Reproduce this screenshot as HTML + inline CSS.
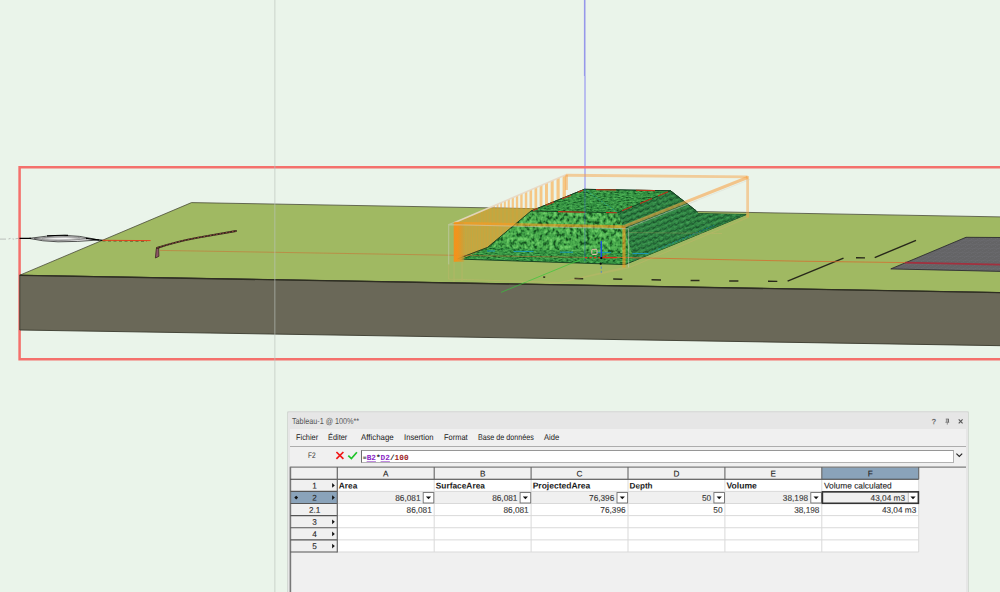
<!DOCTYPE html>
<html lang="fr">
<head>
<meta charset="utf-8">
<title>Tableau-1</title>
<style>
html,body{margin:0;padding:0;background:#eaf4ea;}
body{width:1000px;height:592px;position:relative;overflow:hidden;font-family:"Liberation Sans",sans-serif;color:#1b1b1b;}
#scene{position:absolute;left:0;top:0;}
#panel{position:absolute;left:288px;top:411px;width:680px;height:190px;background:#e6e6e6;border-radius:1.2px 1.2px 0 0;box-shadow:0 0 0 0.7px #c9cec9, inset 0 1.3px 0 #d3d6d3;clip-path:inset(0.45px -1px 0 -1px);}
#title{position:absolute;left:0;top:0;width:680px;height:18px;}
#title .cap{position:absolute;left:3.9px;top:5px;font-size:8.6px;line-height:11px;color:#555;white-space:nowrap;display:inline-block;transform-origin:0 0;transform:rotate(0.03deg) scaleX(0.84);}
#inner{position:absolute;left:2px;top:18px;width:676px;height:172px;background:#f0f0f0;}
#menu{position:absolute;left:0;top:0;width:676px;height:17px;}
#menu span{position:absolute;top:3.2px;font-size:8.3px;line-height:11px;color:#222;white-space:nowrap;display:inline-block;transform-origin:0 0;}
#sep{position:absolute;left:0;top:17px;width:676px;height:1px;background:#adadad;}
#fbar{position:absolute;left:0;top:18px;width:676px;height:20px;}
#cellref{position:absolute;left:18.2px;top:3.1px;font-size:8px;line-height:11px;color:#333;display:inline-block;transform-origin:0 0;transform:rotate(0.03deg) scaleX(0.82);}
#fbox{position:absolute;left:71px;top:3px;width:591px;height:11px;background:#fff;border:1px solid #b2b2b2;border-top-color:#969696;border-left-color:#6e6e6e;}
#ftext{position:absolute;left:0.3px;top:2px;display:inline-block;transform-origin:0 0;transform:rotate(0.03deg);font-family:"Liberation Mono",monospace;font-weight:bold;font-size:7.75px;line-height:11px;letter-spacing:0;white-space:nowrap;color:#222;}
#ftext .r{color:#8a24c4;text-decoration:underline;text-decoration-color:#c08ae0;text-underline-offset:0.6px;text-decoration-thickness:0.8px;}
#ftext .n{color:#9b1c1c;}
#grid{position:absolute;left:0;top:0;}
</style>
</head>
<body>
<svg id="scene" width="1000" height="592" viewBox="0 0 1000 592">
<defs>
<pattern id="gF" width="10" height="9" patternUnits="userSpaceOnUse">
<rect width="10" height="9" fill="#44a556"/>
<path d="M0.6 1.6q1.6 2 3.2 0.4M5 0.8q1.2 2.2 3.2 1.6M1.2 5q1.4 -1.8 3 0.2M5.6 5.8q1.8 1.6 3.4 -0.4M2.8 8q1.2 -1.4 2.8 0.2M7.8 3.6q0.9 1.1 1.8 0.2" stroke="#1b5a2a" stroke-width="1.25" fill="none" stroke-linecap="round"/>
<path d="M3.6 3.2l1 1M7.2 7.6l1 -1M0.2 7l0.9 0.7M9 0.3l0.6 0.9" stroke="#74d482" stroke-width="0.8" fill="none"/>
</pattern>
<pattern id="gT" width="6" height="3.2" patternUnits="userSpaceOnUse" patternTransform="skewX(-48)">
<rect width="6" height="3.2" fill="#3b9b4e"/>
<path d="M0.3 0.9q1.2 0.9 2.4 0.1M3.4 2.3q1.1 0.8 2.3 0" stroke="#1d6430" stroke-width="0.75" fill="none" stroke-linecap="round"/>
</pattern>
<pattern id="gR" width="6.5" height="5" patternUnits="userSpaceOnUse" patternTransform="rotate(-21) skewX(-35)">
<rect width="6.5" height="5" fill="#338c47"/>
<path d="M0.4 0.8q2.6 2.6 5.2 0.2" stroke="#16482a" stroke-width="1.2" fill="none" stroke-linecap="round"/>
<path d="M1.2 3.6q1.8 1.2 3.6 0.1" stroke="#4fb264" stroke-width="0.8" fill="none" stroke-linecap="round"/>
</pattern>
<pattern id="gB" width="5" height="2.6" patternUnits="userSpaceOnUse" patternTransform="skewX(-30)">
<rect width="5" height="2.6" fill="#358f48"/>
<path d="M0.3 0.8q1 0.8 2 0.1M2.8 1.9q1 0.7 2 0" stroke="#1a5a2b" stroke-width="0.7" fill="none" stroke-linecap="round"/>
</pattern>
<pattern id="asph" width="6" height="4" patternUnits="userSpaceOnUse" patternTransform="skewX(-60)">
<rect width="6" height="4" fill="#646466"/>
<path d="M0 0H6M0 0V4" stroke="#74747a" stroke-width="0.5" fill="none"/>
</pattern>
<filter id="nzF" x="0" y="0" width="1" height="1" color-interpolation-filters="sRGB">
<feTurbulence type="fractalNoise" baseFrequency="0.3 0.24" numOctaves="2" seed="11" result="n"/>
<feColorMatrix in="n" type="matrix" values="2.0 0 0 0 -0.46  2.0 0 0 0 -0.46  2.0 0 0 0 -0.46  0 0 0 0 1"/>
<feComponentTransfer><feFuncR type="table" tableValues="0.08 0.16 0.27 0.33 0.42"/><feFuncG type="table" tableValues="0.3 0.48 0.65 0.71 0.8"/><feFuncB type="table" tableValues="0.12 0.2 0.29 0.33 0.4"/></feComponentTransfer>
<feComposite in2="SourceGraphic" operator="in"/>
</filter>
<filter id="nzT" x="0" y="0" width="1" height="1" color-interpolation-filters="sRGB">
<feTurbulence type="fractalNoise" baseFrequency="0.3 0.75" numOctaves="2" seed="5" result="n"/>
<feColorMatrix in="n" type="matrix" values="1.7 0 0 0 -0.35  1.7 0 0 0 -0.35  1.7 0 0 0 -0.35  0 0 0 0 1"/>
<feComponentTransfer><feFuncR type="table" tableValues="0.08 0.17 0.25 0.32"/><feFuncG type="table" tableValues="0.33 0.52 0.63 0.72"/><feFuncB type="table" tableValues="0.13 0.23 0.29 0.35"/></feComponentTransfer>
<feComposite in2="SourceGraphic" operator="in"/>
</filter>
<filter id="nzR" x="0" y="0" width="1" height="1" color-interpolation-filters="sRGB">
<feTurbulence type="fractalNoise" baseFrequency="0.3 0.45" numOctaves="2" seed="8" result="n"/>
<feColorMatrix in="n" type="matrix" values="1.7 0 0 0 -0.35  1.7 0 0 0 -0.35  1.7 0 0 0 -0.35  0 0 0 0 1"/>
<feComponentTransfer><feFuncR type="table" tableValues="0.06 0.13 0.2 0.26"/><feFuncG type="table" tableValues="0.25 0.42 0.52 0.6"/><feFuncB type="table" tableValues="0.11 0.2 0.27 0.32"/></feComponentTransfer>
<feComposite in2="SourceGraphic" operator="in"/>
</filter>
<linearGradient id="postL" x1="0" x2="1" y1="0" y2="0">
<stop offset="0" stop-color="#f59119"/><stop offset="0.35" stop-color="#f3931b"/><stop offset="0.7" stop-color="#de992a" stop-opacity="0.9"/><stop offset="1" stop-color="#cba038" stop-opacity="0.5"/>
</linearGradient>
</defs>
<rect x="0" y="0" width="1000" height="592" fill="#eaf4ea"/>
<line x1="584.7" y1="0" x2="584.7" y2="76" stroke="#9698ea" stroke-width="1.6"/>
<line x1="585" y1="76" x2="585" y2="190" stroke="#a9abef" stroke-width="1.5"/>
<!-- selection frame -->
<path d="M1002,167.2 H19.6 V359.2 H1002" fill="none" stroke="#f4706c" stroke-width="2.5"/>
<!-- terrain slab -->
<polygon points="19.8,275.2 191.5,202.6 1001,216.9 1001,292.6" fill="#a0b962" stroke="#4a4b3a" stroke-width="0.8" stroke-linejoin="round"/>
<polygon points="19.8,275.2 1001,292.6 1001,345.7 19.8,330" fill="#6a6858" stroke="#3a3a2e" stroke-width="0.9" stroke-linejoin="round"/>
<line x1="19.8" y1="275.3" x2="1001" y2="292.7" stroke="#2e2e22" stroke-width="1.3"/>
<path d="M0,239.1 H6 M8.5,239 l2,-0.6 M12.5,238.9 l1.6,0.3 M15.5,238.8 l3,-0.5" stroke="#9a9a9a" stroke-width="0.8" fill="none" opacity="0.75"/>
<path d="M29,238.4 Q46,235.5 65,235.4 Q80,235.7 92,238.6 L99,240 Q76,241.9 58,241.8 Q42,241.4 29,238.4 Z" fill="#f6f6f6" stroke="#0a0a0a" stroke-width="0.7" stroke-linejoin="round"/>
<path d="M34,238.6 Q50,236.5 66,236.5 Q78,236.8 87,238.8 Q70,240.7 58,240.6 Q45,240.3 34,238.6 Z" fill="#d4d4d4" stroke="#3a3a3a" stroke-width="0.5"/>
<path d="M42,238.6 Q54,237.6 66,237.7 Q75,238 80,238.8 Q68,239.7 58,239.6 Q49,239.5 42,238.6 Z" fill="#fff" stroke="#8a8a8a" stroke-width="0.4"/>
<path d="M19.5,238.4 H31 M47,235.9 Q56,235.1 68,235.3 M86,238.4 Q93,239.2 102.5,240.4" stroke="#000" stroke-width="1.2" fill="none"/>
<line x1="102.5" y1="240.9" x2="147" y2="241.2" stroke="#2a1a10" stroke-width="0.8" stroke-dasharray="3 2.5" opacity="0.8"/>
<line x1="102.5" y1="240.3" x2="150.6" y2="240.6" stroke="#e2431c" stroke-width="1"/>
<polyline points="159.8,250.4 455,255.3" fill="none" stroke="#d2602a" stroke-width="0.8" opacity="0.6"/>
<path d="M155.4,258 L156.3,248.6 L158.6,247.3 L158.9,256.3 Z" fill="#8d5566" stroke="#3c2622" stroke-width="0.8" stroke-linejoin="round"/>
<path d="M157,248 Q176,241.6 198,237.6 L236,231" fill="none" stroke="#33241c" stroke-width="1.9" stroke-linecap="round"/>
<path d="M157,248 Q176,241.6 198,237.6 L236,231" fill="none" stroke="#9a5040" stroke-width="0.9" stroke-dasharray="1.6 1.6"/>
<polygon points="890.8,268.9 966,237.3 1001,237.5 1001,271.4" fill="url(#asph)" stroke="#2e2e30" stroke-width="0.9" stroke-linejoin="round"/>
<line x1="787.6" y1="281.1" x2="843.5" y2="258.1" stroke="#27271a" stroke-width="1.4"/>
<line x1="874.7" y1="257.6" x2="916" y2="240.3" stroke="#27271a" stroke-width="1.4"/>
<line x1="768" y1="281.3" x2="777.3" y2="281.4" stroke="#27271a" stroke-width="1.4"/>
<line x1="856" y1="257.8" x2="865" y2="257.9" stroke="#27271a" stroke-width="1.4"/>
<line x1="543.2" y1="277.1" x2="545.2" y2="277.25" stroke="#2c2c1c" stroke-width="1.5"/>
<line x1="574.5" y1="278.5" x2="583.2" y2="278.65" stroke="#2c2c1c" stroke-width="1.5"/>
<line x1="613.2" y1="279.0" x2="622.3" y2="279.15" stroke="#2c2c1c" stroke-width="1.5"/>
<line x1="651.5" y1="279.8" x2="661" y2="279.95" stroke="#2c2c1c" stroke-width="1.5"/>
<line x1="690.6" y1="280.4" x2="699.5" y2="280.55" stroke="#2c2c1c" stroke-width="1.5"/>
<line x1="729.2" y1="280.9" x2="738.4" y2="281.05" stroke="#2c2c1c" stroke-width="1.5"/>
<polygon points="457.2,259 487.6,247.4 531,211 584.4,189.3 670.6,190.8 696.3,210.9 698,213.6 746.2,214.6 625,264.6" fill="#2f8a44" filter="url(#nzT)"/>
<polygon points="457.2,259 487.6,247.4 531,211 584.4,189.3 670.6,190.8 696.3,210.9 698,213.6 746.2,214.6 625,264.6" fill="none" stroke="#153d20" stroke-width="0.9" stroke-linejoin="round"/>
<path d="M462,219.45 L463.06,218.99 L463.06,258.15 L462,258.61 Z M464.04,218.57 L465.15,218.1 L465.15,257.24 L464.04,257.72 Z M466.18,217.66 L467.33,217.16 L467.33,256.29 L466.18,256.79 Z M468.4,216.7 L469.61,216.19 L469.61,255.3 L468.4,255.83 Z M470.72,215.71 L471.98,215.17 L471.98,254.27 L470.72,254.82 Z M473.14,214.67 L474.45,214.11 L474.45,253.2 L473.14,253.77 Z M475.66,213.59 L477.03,213 L477.03,252.08 L475.66,252.67 Z M478.29,212.46 L479.72,211.84 L479.72,250.91 L478.29,251.53 Z M481.04,211.28 L482.52,210.64 L482.52,249.69 L481.04,250.33 Z M483.9,210.05 L485.45,209.38 L485.45,248.41 L483.9,249.09 Z M486.88,208.77 L488.5,208.07 L488.5,247.09 L486.88,247.79 Z M490,207.43 L491.69,206.71 L491.69,245.7 L490,246.44 Z M493.25,206.04 L495.01,205.28 L495.01,244.26 L493.25,245.03 Z M496.63,204.58 L498.47,203.79 L498.47,242.75 L496.63,243.55 Z M500.17,203.06 L502.08,202.24 L502.08,241.18 L500.17,242.02 Z M503.85,201.48 L505.85,200.62 L505.85,239.55 L503.85,240.42 Z M507.7,199.83 L509.78,198.94 L509.78,237.84 L507.7,238.74 Z M511.71,198.11 L513.88,197.18 L513.88,236.06 L511.71,237 Z M515.89,196.32 L518.15,195.34 L518.15,234.2 L515.89,235.18 Z M520.25,194.44 L522.61,193.43 L522.61,232.26 L520.25,233.29 Z M524.8,192.49 L527.26,191.43 L527.26,230.24 L524.8,231.31 Z M529.54,190.45 L532.11,189.35 L532.11,228.13 L529.54,229.25 Z M534.49,188.33 L537.17,187.18 L537.17,225.93 L534.49,227.1 Z M539.65,186.11 L542.45,184.91 L542.45,223.64 L539.65,224.85 Z M545.03,183.8 L547.95,182.55 L547.95,221.25 L545.03,222.51 Z M550.65,181.39 L553.69,180.08 L553.69,218.75 L550.65,220.07 Z M556.5,178.88 L559.68,177.51 L559.68,216.15 L556.5,217.53 Z M562.61,176.26 L565.92,174.83 L565.92,213.43 L562.61,214.87 Z" fill="#ff9a1f" opacity="0.5"/>
<polygon points="458,221.2 489.8,207.7 566,209 566,213.4 454.2,262" fill="#c6a43c" opacity="0.78"/>
<line x1="454.2" y1="222.8" x2="566" y2="174.8" stroke="#e8d8c4" stroke-width="1.6" opacity="0.9"/>
<line x1="566" y1="175.2" x2="747.6" y2="176.9" stroke="#f9a040" stroke-width="2.9" opacity="0.47"/>
<line x1="747.6" y1="176.1" x2="747.6" y2="217.6" stroke="#f9a040" stroke-width="2.8" opacity="0.45"/>
<line x1="566.6" y1="174.8" x2="566.6" y2="190" stroke="#f9a040" stroke-width="2.6" opacity="0.5"/>
<polygon points="617.8,212.7 670.6,190.8 696.3,210.9 698,213.6 746.2,214.6 633,261.3 632.3,253.6" fill="#2c7f40" filter="url(#nzR)"/>
<polygon points="617.8,212.7 670.6,190.8 696.3,210.9 698,213.6 746.2,214.6 633,261.3 632.3,253.6" fill="url(#gR)" opacity="0.62"/>
<polygon points="487.6,247.4 531,211 617.8,212.7 632.3,253.6" fill="#44a556" filter="url(#nzF)"/>
<polygon points="531,211 584.4,189.3 670.6,190.8 617.8,212.7" fill="#3b9b4e" filter="url(#nzT)"/>
<path d="M531,211 L617.8,212.7 L670.6,190.8 M584.4,189.3 L670.6,190.8 M531,211 L584.4,189.3 M457.2,259 L487.6,247.4 L531,211 M670.6,190.8 L696.3,210.9" fill="none" stroke="#123a1d" stroke-width="0.9"/>
<path d="M596,189.6 L616,190 M636,190.2 L655,190.6 M533,210.4 l5,-2 M546,205.2 l8,-3.2 M562,198.8 l9,-3.6 M578,192.3 l5,-2 M558,211.6 L585,212.2 M606,212.5 L617,212.7 M622,210.8 l10,-4.2 M640,203.4 l12,-5 M658,196 l10,-4.2" fill="none" stroke="#d0341c" stroke-width="1.1" opacity="0.9"/>
<path d="M584.4,189.3 L617.8,212.7" stroke="#1c9aa8" stroke-width="0.7" stroke-dasharray="2 1.4" opacity="0.8" fill="none"/>
<path d="M648,253.6 L714.3,225.3" stroke="#1c8fb0" stroke-width="0.8" stroke-dasharray="2.5 1.2" opacity="0.8" fill="none"/>
<path d="M487,251 h8 M513.5,251.4 h20 M560,252.2 h13 M597,252.4 h14 M632.4,253.5 h15.6" stroke="#1a9ac4" stroke-width="1" fill="none" opacity="0.9"/>
<line x1="584.9" y1="189.5" x2="584.9" y2="261.4" stroke="#2a4fa8" stroke-width="0.9" opacity="0.6"/>
<polyline points="455,255.3 585,257.4" fill="none" stroke="#c8562a" stroke-width="0.8" opacity="0.6"/>
<polyline points="616,257.4 800,261.2 905,262.6" fill="none" stroke="#d8682c" stroke-width="1" opacity="0.75"/>
<polyline points="905,262.6 1001,264.7" fill="none" stroke="#a82a3a" stroke-width="1.8" opacity="0.9"/>
<line x1="501" y1="292.4" x2="593.5" y2="254.2" stroke="#35c83a" stroke-width="0.8" opacity="0.85"/>
<line x1="585" y1="257.7" x2="601" y2="257.7" stroke="#d8341a" stroke-width="1.2" stroke-dasharray="2.4 2"/>
<line x1="601" y1="257.6" x2="616.8" y2="257.6" stroke="#d8341a" stroke-width="1.4"/>
<path d="M603,257 l4.6,-2.2" stroke="#d8341a" stroke-width="1" fill="none"/>
<line x1="601.3" y1="241" x2="601.3" y2="258.6" stroke="#1d4fe0" stroke-width="1.4"/>
<line x1="601.3" y1="266.5" x2="601.3" y2="274.5" stroke="#3a78d8" stroke-width="0.9" stroke-dasharray="2.2 2.2" opacity="0.85"/>
<circle cx="601.3" cy="258.1" r="1.2" fill="#050510"/><circle cx="600.7" cy="263.7" r="1.1" fill="#050510"/>
<rect x="591.8" y="249.3" width="5.2" height="5.2" rx="1" fill="none" stroke="#e7b9a8" stroke-width="1"/>
<line x1="455.2" y1="223.4" x2="623.6" y2="226.7" stroke="#ff9a1f" stroke-width="3.1" opacity="0.6"/>
<line x1="623.6" y1="226.7" x2="747.6" y2="177.5" stroke="#f9a040" stroke-width="3" opacity="0.56"/>
<rect x="453.7" y="222.3" width="10.5" height="39.4" fill="url(#postL)" opacity="0.95"/>
<rect x="622.4" y="226.6" width="3.2" height="41" fill="#ff9a1f" opacity="0.6"/>
<path d="M448.7,264.6 V224.6 L628.6,228.7 V267.6 M628.6,227.6 L697,200.4 M448.7,224.6 L454,222.6" fill="none" stroke="#d2d2c6" stroke-width="1.1" opacity="0.5"/>
<path d="M697,200.4 L750,179.4" fill="none" stroke="#c9cdc4" stroke-width="1" opacity="0.3"/>
<path d="M454,262 V282 M462,262 V281 M448.7,264.6 V279 L560,282.5 L629.3,267.6 M623.6,267.6 L560,282.5 M629.3,232.5 L722,233.5 M629.3,267.6 L748,217.6" fill="none" stroke="#e8b070" stroke-width="1.1" opacity="0.22"/>
<line x1="274.8" y1="0" x2="274.8" y2="592" stroke="#bcc4bc" stroke-opacity="0.5" stroke-width="1.3"/>
</svg>

<div id="panel">
  <div id="title"><span class="cap">Tableau-1 @ 100%**</span>
    <svg width="50" height="18" viewBox="0 0 50 18" style="position:absolute;left:631px;top:0">
      <text transform="translate(14.9,13.2) rotate(0.03) scale(0.25)" font-family="Liberation Sans, sans-serif" font-size="31" font-weight="bold" text-anchor="middle" fill="#6a6a6a">?</text>
      <path d="M26.8,8 H29.8 M27.4,8 V11.2 M29.2,8 V11.2 M26.4,11.3 H30.2 M28.3,11.3 V13.6" stroke="#727272" stroke-width="0.75" fill="none"/>
      <path d="M29.3,8 V11.2" stroke="#555" stroke-width="0.9" fill="none"/>
      <path d="M39.7,8.4 L43.6,12.4 M43.6,8.4 L39.7,12.4" stroke="#555" stroke-width="1.1" fill="none"/>
    </svg>
  </div>
  <div id="inner">
    <div id="menu">
      <span style="left:5.8px;transform:rotate(0.03deg) scaleX(0.890)">Fichier</span>
      <span style="left:38.0px;transform:rotate(0.03deg) scaleX(0.888)">Éditer</span>
      <span style="left:71.2px;transform:rotate(0.03deg) scaleX(0.949)">Affichage</span>
      <span style="left:113.8px;transform:rotate(0.03deg) scaleX(0.926)">Insertion</span>
      <span style="left:153.8px;transform:rotate(0.03deg) scaleX(0.901)">Format</span>
      <span style="left:188.2px;transform:rotate(0.03deg) scaleX(0.863)">Base de données</span>
      <span style="left:254.2px;transform:rotate(0.03deg) scaleX(0.918)">Aide</span>
    </div>
    <div id="sep"></div>
    <div id="fbar">
      <span id="cellref">F2</span>
      <svg width="30" height="20" viewBox="0 0 30 20" style="position:absolute;left:44px;top:0">
        <path d="M2.4,5 L9.4,11.9 M9.4,5 L2.4,11.9" stroke="#f01818" stroke-width="1.7" fill="none"/>
        <path d="M14.3,8.6 L17.4,11.6 L22.9,5.3" stroke="#1fc42a" stroke-width="1.7" fill="none"/>
      </svg>
      <div id="fbox"><span id="ftext"><span style="font-size:6.4px;margin-left:0.8px;position:relative;top:0.3px">=</span><span class="r">B2</span>*<span class="r">D2</span>/<span class="n">100</span></span></div>
      <svg width="10" height="10" viewBox="0 0 10 10" style="position:absolute;left:665px;top:4px">
        <path d="M1.4,2.6 L4.3,5.5 L7.2,2.6" stroke="#222" stroke-width="1.1" fill="none"/>
      </svg>
    </div>
  </div>
  <svg id="grid" width="681" height="190" viewBox="288 411 681 190" font-family="Liberation Sans, sans-serif">
    <rect x="337.3" y="479.23" width="581.4" height="72.78" fill="#ffffff"/>
    <rect x="337.3" y="491.36" width="581.4" height="12.13" fill="#f0f0f0"/>
    <rect x="290.4" y="491.36" width="46.9" height="12.13" fill="#8aa3ba"/>
    <rect x="821.8" y="467.1" width="96.9" height="12.13" fill="#8aa3ba"/>
    <line x1="337.3" y1="491.36" x2="918.7" y2="491.36" stroke="#d9d9d9" stroke-width="1"/>
    <line x1="337.3" y1="503.49" x2="918.7" y2="503.49" stroke="#d9d9d9" stroke-width="1"/>
    <line x1="337.3" y1="515.62" x2="918.7" y2="515.62" stroke="#d9d9d9" stroke-width="1"/>
    <line x1="337.3" y1="527.75" x2="918.7" y2="527.75" stroke="#d9d9d9" stroke-width="1"/>
    <line x1="337.3" y1="539.88" x2="918.7" y2="539.88" stroke="#d9d9d9" stroke-width="1"/>
    <line x1="337.3" y1="552.01" x2="918.7" y2="552.01" stroke="#d9d9d9" stroke-width="1"/>
    <line x1="434.2" y1="479.23" x2="434.2" y2="552.01" stroke="#d9d9d9" stroke-width="1"/>
    <line x1="531.1" y1="479.23" x2="531.1" y2="552.01" stroke="#d9d9d9" stroke-width="1"/>
    <line x1="628" y1="479.23" x2="628" y2="552.01" stroke="#d9d9d9" stroke-width="1"/>
    <line x1="724.9" y1="479.23" x2="724.9" y2="552.01" stroke="#d9d9d9" stroke-width="1"/>
    <line x1="821.8" y1="479.23" x2="821.8" y2="552.01" stroke="#d9d9d9" stroke-width="1"/>
    <line x1="918.7" y1="479.23" x2="918.7" y2="552.01" stroke="#d9d9d9" stroke-width="1"/>
    <line x1="290.4" y1="467.1" x2="966" y2="467.1" stroke="#7d7d7d" stroke-width="1.1"/>
    <line x1="290.4" y1="466.7" x2="290.4" y2="601" stroke="#787878" stroke-width="1.6"/>
    <line x1="290.4" y1="479.23" x2="918.7" y2="479.23" stroke="#3c3c3c" stroke-width="1.1"/>
    <line x1="290.4" y1="491.36" x2="337.3" y2="491.36" stroke="#555" stroke-width="1.1"/>
    <line x1="290.4" y1="503.49" x2="337.3" y2="503.49" stroke="#555" stroke-width="1.1"/>
    <line x1="290.4" y1="515.62" x2="337.3" y2="515.62" stroke="#555" stroke-width="1.1"/>
    <line x1="290.4" y1="527.75" x2="337.3" y2="527.75" stroke="#555" stroke-width="1.1"/>
    <line x1="290.4" y1="539.88" x2="337.3" y2="539.88" stroke="#555" stroke-width="1.1"/>
    <line x1="290.4" y1="552.01" x2="337.3" y2="552.01" stroke="#555" stroke-width="1.1"/>
    <line x1="337.3" y1="467.1" x2="337.3" y2="552.51" stroke="#666" stroke-width="1.2"/>
    <line x1="434.2" y1="467.1" x2="434.2" y2="479.23" stroke="#666" stroke-width="1.1"/>
    <line x1="531.1" y1="467.1" x2="531.1" y2="479.23" stroke="#666" stroke-width="1.1"/>
    <line x1="628" y1="467.1" x2="628" y2="479.23" stroke="#666" stroke-width="1.1"/>
    <line x1="724.9" y1="467.1" x2="724.9" y2="479.23" stroke="#666" stroke-width="1.1"/>
    <line x1="821.8" y1="467.1" x2="821.8" y2="479.23" stroke="#666" stroke-width="1.1"/>
    <line x1="918.7" y1="467.1" x2="918.7" y2="479.23" stroke="#666" stroke-width="1.1"/>
    <text transform="translate(385.75,476.4) rotate(0.03) scale(0.25)" font-size="32.8" stroke="#333" stroke-width="0.7" stroke-opacity="0.7" text-anchor="middle" fill="#222">A</text>
    <text transform="translate(482.65,476.4) rotate(0.03) scale(0.25)" font-size="32.8" stroke="#333" stroke-width="0.7" stroke-opacity="0.7" text-anchor="middle" fill="#222">B</text>
    <text transform="translate(579.55,476.4) rotate(0.03) scale(0.25)" font-size="32.8" stroke="#333" stroke-width="0.7" stroke-opacity="0.7" text-anchor="middle" fill="#222">C</text>
    <text transform="translate(676.45,476.4) rotate(0.03) scale(0.25)" font-size="32.8" stroke="#333" stroke-width="0.7" stroke-opacity="0.7" text-anchor="middle" fill="#222">D</text>
    <text transform="translate(773.35,476.4) rotate(0.03) scale(0.25)" font-size="32.8" stroke="#333" stroke-width="0.7" stroke-opacity="0.7" text-anchor="middle" fill="#222">E</text>
    <text transform="translate(870.25,476.4) rotate(0.03) scale(0.25)" font-size="32.8" stroke="#333" stroke-width="0.7" stroke-opacity="0.7" text-anchor="middle" fill="#222">F</text>
    <text transform="translate(314.6,488.43) rotate(0.03) scale(0.25)" font-size="32.8" stroke="#333" stroke-width="0.7" stroke-opacity="0.7" text-anchor="middle" fill="#222">1</text>
    <path d="M332.1,483 L334.8,485.4 L332.1,487.8 Z" fill="#111"/>
    <text transform="translate(314.6,500.56) rotate(0.03) scale(0.25)" font-size="32.8" stroke="#333" stroke-width="0.7" stroke-opacity="0.7" text-anchor="middle" fill="#222">2</text>
    <path d="M332.1,495.13 L334.8,497.53 L332.1,499.93 Z" fill="#111"/>
    <text transform="translate(314.6,512.69) rotate(0.03) scale(0.25)" font-size="32.8" stroke="#333" stroke-width="0.7" stroke-opacity="0.7" text-anchor="middle" fill="#222">2.1</text>
    <text transform="translate(314.6,524.82) rotate(0.03) scale(0.25)" font-size="32.8" stroke="#333" stroke-width="0.7" stroke-opacity="0.7" text-anchor="middle" fill="#222">3</text>
    <path d="M332.1,519.39 L334.8,521.79 L332.1,524.19 Z" fill="#111"/>
    <text transform="translate(314.6,536.95) rotate(0.03) scale(0.25)" font-size="32.8" stroke="#333" stroke-width="0.7" stroke-opacity="0.7" text-anchor="middle" fill="#222">4</text>
    <path d="M332.1,531.52 L334.8,533.92 L332.1,536.32 Z" fill="#111"/>
    <text transform="translate(314.6,549.08) rotate(0.03) scale(0.25)" font-size="32.8" stroke="#333" stroke-width="0.7" stroke-opacity="0.7" text-anchor="middle" fill="#222">5</text>
    <path d="M332.1,543.65 L334.8,546.05 L332.1,548.45 Z" fill="#111"/>
    <path d="M294.3,497.53 L296.2,495.63 L298.1,497.53 L296.2,499.43 Z" fill="#111"/>
    <text transform="translate(338.85,488.53) rotate(0.03) scale(0.25)" font-size="33.2" font-weight="bold" fill="#1a1a1a">Area</text>
    <text transform="translate(435.75,488.53) rotate(0.03) scale(0.25)" font-size="33.4" font-weight="bold" fill="#1a1a1a">SurfaceArea</text>
    <text transform="translate(532.65,488.53) rotate(0.03) scale(0.25)" font-size="34" font-weight="bold" fill="#1a1a1a">ProjectedArea</text>
    <text transform="translate(629.55,488.53) rotate(0.03) scale(0.25)" font-size="32.6" font-weight="bold" fill="#1a1a1a">Depth</text>
    <text transform="translate(726.45,488.53) rotate(0.03) scale(0.25)" font-size="34.4" font-weight="bold" fill="#1a1a1a">Volume</text>
    <text transform="translate(824,488.53) rotate(0.03) scale(0.25)" font-size="33.4" stroke="#333" stroke-width="0.7" stroke-opacity="0.7" fill="#1a1a1a">Volume calculated</text>
    <text transform="translate(420.5,500.66) rotate(0.03) scale(0.25)" font-size="33" stroke="#333" stroke-width="0.7" stroke-opacity="0.7" text-anchor="end" fill="#333">86,081</text>
    <rect x="423.2" y="492.56" width="10.6" height="10.43" fill="#fff" stroke="#6e6e6e" stroke-width="0.9"/>
    <path d="M425.9,496.53 L431.1,496.53 L428.5,499.23 Z" fill="#111"/>
    <text transform="translate(431.8,512.79) rotate(0.03) scale(0.25)" font-size="33" stroke="#333" stroke-width="0.7" stroke-opacity="0.7" text-anchor="end" fill="#333">86,081</text>
    <text transform="translate(517.4,500.66) rotate(0.03) scale(0.25)" font-size="33" stroke="#333" stroke-width="0.7" stroke-opacity="0.7" text-anchor="end" fill="#333">86,081</text>
    <rect x="520.1" y="492.56" width="10.6" height="10.43" fill="#fff" stroke="#6e6e6e" stroke-width="0.9"/>
    <path d="M522.8,496.53 L528,496.53 L525.4,499.23 Z" fill="#111"/>
    <text transform="translate(528.7,512.79) rotate(0.03) scale(0.25)" font-size="33" stroke="#333" stroke-width="0.7" stroke-opacity="0.7" text-anchor="end" fill="#333">86,081</text>
    <text transform="translate(614.3,500.66) rotate(0.03) scale(0.25)" font-size="33" stroke="#333" stroke-width="0.7" stroke-opacity="0.7" text-anchor="end" fill="#333">76,396</text>
    <rect x="617" y="492.56" width="10.6" height="10.43" fill="#fff" stroke="#6e6e6e" stroke-width="0.9"/>
    <path d="M619.7,496.53 L624.9,496.53 L622.3,499.23 Z" fill="#111"/>
    <text transform="translate(625.6,512.79) rotate(0.03) scale(0.25)" font-size="33" stroke="#333" stroke-width="0.7" stroke-opacity="0.7" text-anchor="end" fill="#333">76,396</text>
    <text transform="translate(711.2,500.66) rotate(0.03) scale(0.25)" font-size="33" stroke="#333" stroke-width="0.7" stroke-opacity="0.7" text-anchor="end" fill="#333">50</text>
    <rect x="713.9" y="492.56" width="10.6" height="10.43" fill="#fff" stroke="#6e6e6e" stroke-width="0.9"/>
    <path d="M716.6,496.53 L721.8,496.53 L719.2,499.23 Z" fill="#111"/>
    <text transform="translate(722.5,512.79) rotate(0.03) scale(0.25)" font-size="33" stroke="#333" stroke-width="0.7" stroke-opacity="0.7" text-anchor="end" fill="#333">50</text>
    <text transform="translate(808.1,500.66) rotate(0.03) scale(0.25)" font-size="33" stroke="#333" stroke-width="0.7" stroke-opacity="0.7" text-anchor="end" fill="#333">38,198</text>
    <rect x="810.8" y="492.56" width="10.6" height="10.43" fill="#fff" stroke="#6e6e6e" stroke-width="0.9"/>
    <path d="M813.5,496.53 L818.7,496.53 L816.1,499.23 Z" fill="#111"/>
    <text transform="translate(819.4,512.79) rotate(0.03) scale(0.25)" font-size="33" stroke="#333" stroke-width="0.7" stroke-opacity="0.7" text-anchor="end" fill="#333">38,198</text>
    <text transform="translate(905,500.66) rotate(0.03) scale(0.25)" font-size="33" stroke="#333" stroke-width="0.7" stroke-opacity="0.7" text-anchor="end" fill="#333">43,04 m3</text>
    <rect x="908.3" y="492.66" width="9.4" height="9.93" fill="#fff"/>
    <line x1="908.3" y1="492.66" x2="908.3" y2="502.59" stroke="#aaa" stroke-width="0.8"/>
    <path d="M910.4,496.53 L915.6,496.53 L913,499.23 Z" fill="#111"/>
    <text transform="translate(916.3,512.79) rotate(0.03) scale(0.25)" font-size="33" stroke="#333" stroke-width="0.7" stroke-opacity="0.7" text-anchor="end" fill="#333">43,04 m3</text>
    <rect x="822.4" y="491.86" width="96" height="11.43" fill="none" stroke="#333" stroke-width="1.6"/>
  </svg>
</div>
</body>
</html>
